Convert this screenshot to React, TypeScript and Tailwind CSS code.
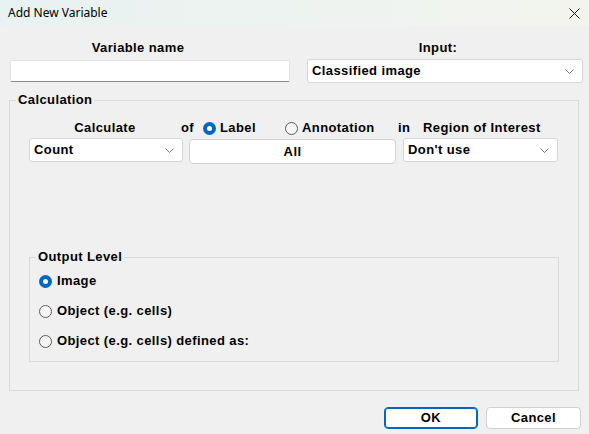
import React from "react";

const font = { fontFamily: '"Liberation Sans", Arial, sans-serif' };

function Chevron() {
  return (
    <svg width="9" height="5" viewBox="0 0 9 5" className="shrink-0">
      <path d="M0.5 0.5 L4.5 4.5 L8.5 0.5" fill="none" stroke="#7a7a7a" strokeWidth="1" />
    </svg>
  );
}

function Radio({ checked }: { checked?: boolean }) {
  return checked ? (
    <span className="w-[13px] h-[13px] rounded-full bg-[#0067c0] flex items-center justify-center shrink-0">
      <span className="w-[5px] h-[5px] rounded-full bg-white" />
    </span>
  ) : (
    <span className="w-[13px] h-[13px] rounded-full border border-[#5c5c5c] bg-[#f5f5f5] shrink-0" />
  );
}

function Select({ value, className }: { value: string; className: string }) {
  return (
    <div
      className={
        "h-[24px] bg-white border border-[#d6d6d6] rounded-[3px] flex items-center justify-between pl-[4px] pr-[8px] font-bold text-[13px] tracking-[0.4px] " +
        className
      }
    >
      <span>{value}</span>
      <Chevron />
    </div>
  );
}

export default function App() {
  return (
    <div className="w-[589px] h-[434px] bg-[#f0f0f0] text-black flex flex-col" style={font}>
      <div className="h-[26px] flex items-center justify-between pl-[8px] pr-[9px] bg-gradient-to-r from-[#e8f2f2] to-[#f3f4ee] text-[12px]">
        <span style={{ fontFamily: '"Noto Sans", "Liberation Sans", sans-serif' }}>Add New Variable</span>
        <svg width="11" height="11" viewBox="0 0 11 11">
          <path d="M0.5 0.5 L10.5 10.5 M10.5 0.5 L0.5 10.5" stroke="#1a1a1a" strokeWidth="1" />
        </svg>
      </div>

      <div className="flex pt-[14px] pl-[10px] font-bold text-[13px] tracking-[0.4px]">
        <div className="w-[280px] flex flex-col items-center">
          <div className="h-[16px] leading-[16px] pr-[24px]">Variable name</div>
          <div className="mt-[4px] w-[280px] h-[22px] bg-white border border-[#e3e3e3] border-b-[#8a8a8a] rounded-[2px]" />
        </div>
        <div className="ml-[17px] w-[276px] flex flex-col items-center">
          <div className="h-[16px] leading-[16px] pr-[14px]">Input:</div>
          <Select value="Classified image" className="mt-[3px] w-[276px] h-[23px]" />
        </div>
      </div>

      <fieldset className="mt-[9px] ml-[9px] w-[570px] h-[299px] border border-[#d9d9d9] px-0 pb-0 font-bold text-[13px] tracking-[0.4px]">
        <legend className="ml-[6px] px-[2px] h-[16px] leading-[16px]">Calculation</legend>

        <div className="pl-[19px] mt-[12px] h-[16px] flex items-center leading-[16px]">
          <span className="w-[152px] text-center">Calculate</span>
          <span className="w-[22px]">of</span>
          <span className="w-[82px] flex items-center gap-[4px]">
            <Radio checked />
            <span>Label</span>
          </span>
          <span className="w-[113px] flex items-center gap-[4px]">
            <Radio />
            <span>Annotation</span>
          </span>
          <span className="w-[25px]">in</span>
          <span>Region of Interest</span>
        </div>

        <div className="pl-[19px] mt-[2px] flex items-start">
          <Select value="Count" className="w-[154px]" />
          <div className="ml-[6px] mt-[1px] w-[207px] h-[25px] bg-white border border-[#d3d3d3] rounded-[4px] flex items-center justify-center">
            All
          </div>
          <Select value="Don't use" className="ml-[7px] w-[155px]" />
        </div>

        <fieldset className="mt-[85px] ml-[19px] w-[530px] h-[113px] border border-[#d9d9d9] px-0 pb-0">
          <legend className="ml-[6px] px-[2px] h-[16px] leading-[16px]">Output Level</legend>
          <div className="mt-[8px] pl-[9px] flex flex-col gap-[14px] leading-[16px]">
            <div className="h-[16px] flex items-center gap-[5px]">
              <Radio checked />
              <span>Image</span>
            </div>
            <div className="h-[16px] flex items-center gap-[5px]">
              <Radio />
              <span>Object (e.g. cells)</span>
            </div>
            <div className="h-[16px] flex items-center gap-[5px]">
              <Radio />
              <span>Object (e.g. cells) defined as:</span>
            </div>
          </div>
        </fieldset>
      </fieldset>

      <div className="mt-[16px] flex justify-end gap-[8px] pr-[8px] font-bold text-[13px] tracking-[0.4px]">
        <button className="w-[94px] h-[22px] bg-white border border-[#0067c0] rounded-[4px] shadow-[inset_0_0_0_1px_#0067c0]">OK</button>
        <button className="w-[95px] h-[22px] bg-white border border-[#d0d0d0] rounded-[4px]">Cancel</button>
      </div>
    </div>
  );
}
